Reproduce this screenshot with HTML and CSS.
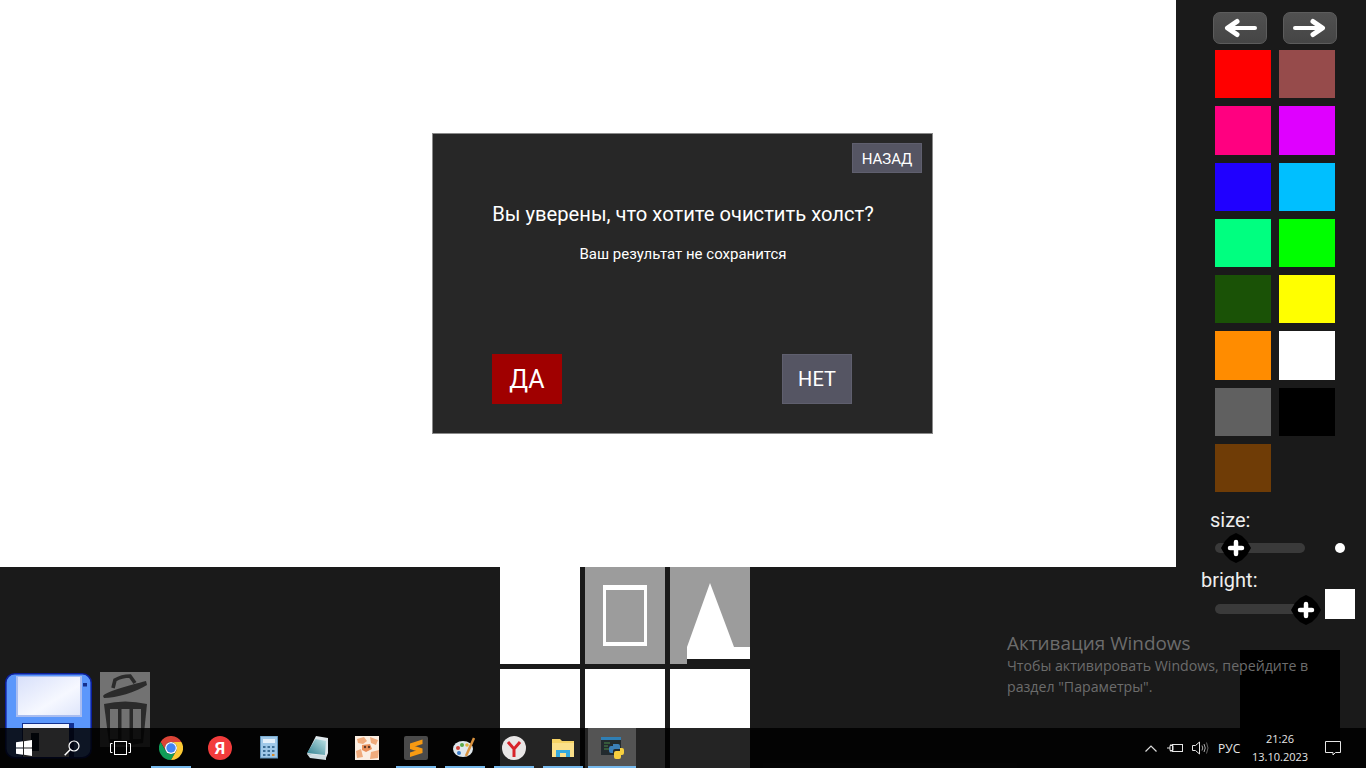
FILE: index.html
```html
<!DOCTYPE html>
<html lang="ru">
<head>
<meta charset="utf-8">
<title>Холст</title>
<link rel="stylesheet" href="styles.css">
</head>
<body>
<div class="app">
  <div class="workspace">
    <main class="canvas"></main>
    <section class="tray-area">
      <div class="tools">
        <svg class="save" viewBox="0 0 87 86" aria-label="Сохранить">
          <defs>
            <linearGradient id="lbl" x1="0" y1="0" x2="1" y2="1"><stop offset="0" stop-color="#d8e0fa"/><stop offset=".6" stop-color="#f6f8ff"/><stop offset="1" stop-color="#dfe6fb"/></linearGradient>
          </defs>
          <rect x=".8" y=".8" width="85.4" height="84" rx="9" fill="#5b97fb" stroke="#0b1f9c" stroke-width="1.6"/>
          <rect x="11" y="3" width="66" height="41" fill="#a9bdf0"/>
          <rect x="13" y="4" width="62" height="38" fill="url(#lbl)"/>
          <rect x="78" y="10" width="4" height="3.5" fill="#14318f"/>
          <rect x="17" y="50" width="52" height="34" fill="#12308f"/>
          <rect x="18" y="51" width="46" height="33" fill="#f3f5fc"/>
          <rect x="26" y="60" width="8" height="18" fill="#14233f"/>
        </svg>
        <svg class="trash" viewBox="0 0 50 75" aria-label="Очистить">
          <rect width="50" height="75" fill="#727272"/>
          <path d="M3 24 C5 20 30 13 46 9 L47 13 C36 20 16 26 4 26Z" fill="#2b2b2b"/>
          <path d="M13 16 L15 8 C20 5 26 4 30 4 L35 11" fill="none" stroke="#2b2b2b" stroke-width="3.6"/>
          <path d="M4 32 Q25 27 47 32 L43 71 Q25 75 9 71Z" fill="#2b2b2b"/>
          <rect x="10" y="37" width="8" height="30" fill="#727272"/>
          <rect x="21.500" y="37" width="8" height="31" fill="#727272"/>
          <rect x="33" y="37" width="8" height="30" fill="#727272"/>
        </svg>
      </div>
      <div class="tiles">
        <div class="tile"></div>
        <div class="tile tile-grey">
          <div class="tile-rect"></div>
        </div>
        <div class="tile tile-grey tile-shape">
          <svg class="shape" viewBox="0 0 80 97"><path d="M0 97V0H80V92H17V97Z" fill="#9c9c9c"/><path d="M40 16 L64 80 H80 V92 H17 V80Z" fill="#fff"/></svg>
        </div>
        <div class="tile"></div>
        <div class="tile"></div>
        <div class="tile"></div>
      </div>
    </section>
  </div>

  <aside class="panel">
    <div class="nav">
      <button class="nav-btn" aria-label="Назад"><svg viewBox="0 0 34 20"><path d="M14 3.500 L4.500 10 L14 16.500" fill="none" stroke="#fff" stroke-width="5" stroke-linecap="round" stroke-linejoin="round"/><path d="M7 10 H32" fill="none" stroke="#fff" stroke-width="4" stroke-linecap="round"/></svg></button>
      <button class="nav-btn" aria-label="Вперёд"><svg viewBox="0 0 34 20"><path d="M20 3.500 L29.500 10 L20 16.500" fill="none" stroke="#fff" stroke-width="5" stroke-linecap="round" stroke-linejoin="round"/><path d="M27 10 H2" fill="none" stroke="#fff" stroke-width="4" stroke-linecap="round"/></svg></button>
    </div>
    <div class="palette">
      <span class="swatch c-red"></span><span class="swatch c-brick"></span>
      <span class="swatch c-pink"></span><span class="swatch c-magenta"></span>
      <span class="swatch c-blue"></span><span class="swatch c-sky"></span>
      <span class="swatch c-mint"></span><span class="swatch c-lime"></span>
      <span class="swatch c-forest"></span><span class="swatch c-yellow"></span>
      <span class="swatch c-orange"></span><span class="swatch c-white"></span>
      <span class="swatch c-grey"></span><span class="swatch c-black"></span>
      <span class="swatch c-brown"></span>
    </div>
    <div class="control control-size">
      <div class="ctl-label label-size">size:</div>
      <div class="ctl-row">
        <div class="track">
          <svg class="knob knob-size" viewBox="0 0 30 30"><path d="M15 0 L21 3 L26 8 L30 15 L26 22 L21 27 L15 30 L9 27 L4 22 L0 15 L4 8 L9 3Z" fill="#000"/><path d="M15 9 V21 M9 15 H21" stroke="#fff" stroke-width="4.500" stroke-linecap="round"/></svg>
        </div>
        <span class="dot"></span>
      </div>
    </div>
    <div class="control control-bright">
      <div class="ctl-label label-bright">bright:</div>
      <div class="ctl-row">
        <div class="track">
          <svg class="knob knob-bright" viewBox="0 0 30 30"><path d="M15 0 L21 3 L26 8 L30 15 L26 22 L21 27 L15 30 L9 27 L4 22 L0 15 L4 8 L9 3Z" fill="#000"/><path d="M15 9 V21 M9 15 H21" stroke="#fff" stroke-width="4.500" stroke-linecap="round"/></svg>
        </div>
        <span class="bright-box"></span>
      </div>
    </div>
  </aside>

  <div class="black-box"></div>

  <div class="watermark">
    <div class="wm-title">Активация Windows</div>
    <div class="wm-text">Чтобы активировать Windows, перейдите в<br>раздел "Параметры".</div>
  </div>

  <div class="dialog">
    <div class="dialog-top"><button class="btn btn-back">НАЗАД</button></div>
    <h1 class="dialog-title">Вы уверены, что хотите очистить холст?</h1>
    <p class="dialog-sub">Ваш результат не сохранится</p>
    <div class="dialog-actions">
      <button class="btn btn-yes">ДА</button>
      <button class="btn btn-no">НЕТ</button>
    </div>
  </div>

  <footer class="taskbar">
    <div class="tb-sys">
      <div class="tb-slot">
        <svg class="ico16" viewBox="0 0 16 16"><path d="M0 2.300 L7 1.300 V7.500 H0Z M8 1.200 L16 0 V7.500 H8Z M0 8.500 H7 V14.700 L0 13.700Z M8 8.500 H16 V16 L8 14.800Z" fill="#fff"/></svg>
      </div>
      <div class="tb-slot">
        <svg class="ico16" viewBox="0 0 16 16"><circle cx="10" cy="6" r="5" fill="none" stroke="#fff" stroke-width="1.200"/><path d="M6.300 9.500 L.7 15.300" stroke="#fff" stroke-width="1.500"/></svg>
      </div>
      <div class="tb-slot">
        <svg class="ico-view" viewBox="0 0 21 14"><rect x="4.500" y=".5" width="12" height="13" fill="none" stroke="#fff"/><path d="M2.500 2.500 H.5 V11.500 H2.500 M18.500 2.500 H20.500 V11.500 H18.500" fill="none" stroke="#fff"/></svg>
      </div>
    </div>
    <div class="tb-apps">
      <div class="tb-app on">
        <svg class="ico24" viewBox="0 0 24 24"><path d="M22.400 6 A12 12 0 0 0 1.600 6 L6.800 15 A6 6 0 0 1 12 6Z" fill="#db4437"/><path d="M1.600 6 A12 12 0 0 0 12 24 L17.200 15 A6 6 0 0 1 6.800 15Z" fill="#0f9d58"/><path d="M22.400 6 H12 A6 6 0 0 1 17.200 15 L12 24 A12 12 0 0 0 22.400 6Z" fill="#fcc934"/><circle cx="12" cy="12" r="6" fill="#fff"/><circle cx="12" cy="12" r="4.700" fill="#4285f4"/></svg>
      </div>
      <div class="tb-app">
        <div class="ya">Я</div>
      </div>
      <div class="tb-app">
        <svg class="ico24" viewBox="0 0 24 24"><rect x="3.500" y="0" width="17" height="22" fill="#9fc8e8" stroke="#5f93bb"/><rect x="6" y="3" width="12" height="4" fill="#e4f0fa"/><path d="M6 10h2.500v2H6zM10.500 10H13v2h-2.500zM15 10h2.500v2H15zM6 14h2.500v2H6zM10.500 14H13v2h-2.500zM15 14h2.500v2H15zM6 18h2.500v2H6zM10.500 18H13v2h-2.500z" fill="#3e6f96"/><path d="M15 18h2.500v2H15z" fill="#d98a2b"/></svg>
      </div>
      <div class="tb-app">
        <svg class="ico24" viewBox="0 0 24 24"><defs><linearGradient id="note" x1="0" y1="1" x2="1" y2="0"><stop offset="0" stop-color="#2f7f8f"/><stop offset="1" stop-color="#bfe3e6"/></linearGradient></defs><path d="M10 0 L22 2 L22 17 L20 22 L1 18Z" fill="#dfe8ec"/><path d="M9.500 3 L20 5 L19 19 L1 17Z" fill="url(#note)"/><path d="M1 18 L20 20 L20 24 L4 22Z" fill="#cfdde2"/></svg>
      </div>
      <div class="tb-app">
        <svg class="ico24" viewBox="0 0 24 24"><rect width="24" height="24" fill="#fbeee2"/><path d="M2 3 L9 1 L12 5 L8 8 L3 7Z M15 1 L23 4 L21 9 L16 7Z M1 15 L6 13 L8 21 L2 22Z M16 16 L24 14 L23 22 L15 23Z" fill="#f0ab7c"/><path d="M7 9 L15 8 L17 13 L11 16 L7 14Z" fill="#e98f5a"/><circle cx="10" cy="11" r="1.200" fill="#5c3a28"/><circle cx="14" cy="11" r="1.200" fill="#5c3a28"/></svg>
      </div>
      <div class="tb-app">
        <svg class="ico24" viewBox="0 0 24 24"><rect width="24" height="24" rx="2" fill="#4a4a4a"/><path d="M18.500 3.500 V8 L6 12 V7.500Z M6 8.500 L18.500 12.500 V17 L6 13Z M18.500 12.500 V17 L6 21 V16.500Z" fill="#f79a12"/></svg>
      </div>
      <div class="tb-app">
        <svg class="ico24" viewBox="0 0 24 24"><ellipse cx="10" cy="13" rx="10" ry="8" fill="#dfe7ec"/><circle cx="5" cy="12" r="2" fill="#d2453c"/><circle cx="9" cy="9" r="2" fill="#57a848"/><circle cx="14" cy="9" r="1.800" fill="#e2b13c"/><circle cx="6" cy="17" r="2" fill="#3a7bc8"/><path d="M21 2 L13 20" stroke="#d9923e" stroke-width="2.500"/></svg>
      </div>
      <div class="tb-app">
        <svg class="ico24" viewBox="0 0 24 24"><circle cx="12" cy="12" r="12" fill="#e9e6e6"/><path d="M6 6 L12 13 L18 6 M12 13 V21" fill="none" stroke="#d8232a" stroke-width="3"/></svg>
      </div>
      <div class="tb-app">
        <svg class="ico24" viewBox="0 0 24 24"><path d="M1 3 H9 L11 5 H23 V21 H1Z" fill="#f6d365"/><path d="M1 7 H23 V21 H1Z" fill="#fbe08a"/><path d="M5 21 V14 H19 V21 H15 V17 H9 V21Z" fill="#35a9df"/></svg>
      </div>
      <div class="tb-app on active">
        <svg class="ico24" viewBox="0 0 24 24"><rect x="1" y="1" width="20" height="18" fill="#222a2e"/><rect x="1" y="1" width="20" height="3" fill="#2f7fb5"/><path d="M4 7h6M4 10h4M4 13h5" stroke="#4a8a4a"/><path d="M13 8 h5 a2 2 0 0 1 2 2 v3 h-5 a2 2 0 0 0 -2 2 v2 h-2 a2 2 0 0 1 -2 -2 v-3 a2 2 0 0 1 2 -2 h2Z" fill="#3b7fb8"/><path d="M20 12 h2 a2 2 0 0 1 2 2 v3 a2 2 0 0 1 -2 2 h-1 v2 a2 2 0 0 1 -2 2 h-3 a2 2 0 0 1 -2 -2 v-4 a2 2 0 0 1 2 -2 h4Z" fill="#f6cf3f"/></svg>
      </div>
    </div>
    <div class="tb-tray">
      <svg class="t-chev" viewBox="0 0 12 7"><path d="M.5 6.500 L6 1 L11.500 6.500" fill="none" stroke="#ddd" stroke-width="1.200"/></svg>
      <svg class="t-batt" viewBox="0 0 16 10"><rect x="5.500" y="1.500" width="10" height="7" fill="none" stroke="#e6e6e6"/><path d="M0 5 H3 M3 2.500 H6 V7.500 H3Z M4 1 V2.500 M4 7.500 V9" fill="none" stroke="#e6e6e6"/></svg>
      <svg class="t-vol" viewBox="0 0 17 14"><path d="M.5 4.500 H3.500 L7.500 1 V13 L3.500 9.500 H.5Z" fill="none" stroke="#e6e6e6"/><path d="M10 4.500 Q11.500 7 10 9.500 M12 3 Q14.500 7 12 11" fill="none" stroke="#aaa"/><path d="M14.500 1.500 Q17.500 7 14.500 12.500" fill="none" stroke="#666"/></svg>
      <span class="t-lang">РУС</span>
      <div class="t-clock"><span>21:26</span><span>13.10.2023</span></div>
      <svg class="t-note" viewBox="0 0 16 15"><path d="M.5 .5 H15.500 V11.500 H10.500 L8 14 V11.500 H.5Z" fill="none" stroke="#e6e6e6"/></svg>
    </div>
  </footer>
</div>
</body>
</html>
```
FILE: styles.css
```css
* { box-sizing: border-box; }
html, body { margin: 0; padding: 0; height: 100%; }
body { font-family: Roboto, "Noto Sans", sans-serif; background: #1a1a1a; overflow: hidden; }

.app { position: relative; width: 1366px; height: 768px; display: flex; overflow: hidden; background: #1a1a1a; }

.workspace { width: 1176px; display: flex; flex-direction: column; }
.canvas { height: 567px; background: #fff; flex: none; }
.tray-area { flex: 1; display: grid; grid-template-columns: 500px 250px; background: #1a1a1a; min-height: 0; }

.tools { display: flex; align-items: flex-start; gap: 8px; padding: 105px 0 0 5px; }
.save { width: 87px; height: 86px; flex: none; margin-top: 1px; }
.trash { width: 50px; height: 75px; flex: none; }

.tiles { display: grid; grid-template-columns: repeat(3, 80px); grid-template-rows: 97px 100px; column-gap: 5px; row-gap: 5px; }
.tile { background: #fff; position: relative; }
.tile-grey { background: #9c9c9c; display: flex; justify-content: center; align-items: flex-start; padding-top: 18px; }
.tile-rect { width: 44px; height: 61px; border-style: solid; border-color: #fff; border-width: 5px 3.5px 4px; }
.tile-shape { background: transparent; padding: 0; }
.shape { display: block; width: 80px; height: 97px; }

.panel { width: 190px; background: #1a1a1a; padding: 12px 0 0; display: flex; flex-direction: column; }
.nav { display: flex; gap: 16px; padding-left: 37px; height: 32px; }
.nav-btn { width: 54px; height: 32px; padding: 0; border: 1px solid #5c5c5c; border-radius: 7px; background: linear-gradient(#505050, #454545); display: flex; align-items: center; justify-content: center; }
.nav-btn svg { width: 34px; height: 20px; display: block; }

.palette { margin: 6px 0 0 39px; display: grid; grid-template-columns: 56px 56px; grid-auto-rows: 48.26px; column-gap: 8px; row-gap: 8px; }
.swatch { display: block; }
.c-red { background: #ff0000; }
.c-brick { background: #964b4b; }
.c-pink { background: #ff0080; }
.c-magenta { background: #df00ff; }
.c-blue { background: #2000ff; }
.c-sky { background: #00bfff; }
.c-mint { background: #00ff80; }
.c-lime { background: #00ff00; }
.c-forest { background: #1a5206; }
.c-yellow { background: #ffff00; }
.c-orange { background: #ff8c00; }
.c-white { background: #fff; }
.c-grey { background: #606060; }
.c-black { background: #000; }
.c-brown { background: #6f3c06; }

.control { color: #eee; }
.ctl-label { font-size: 20px; line-height: 24px; }
.control-size { margin-top: 15.6px; }
.label-size { padding-left: 34px; }
.control-bright { margin-top: 6px; }
.label-bright { padding-left: 25px; }
.ctl-row { display: flex; align-items: flex-start; padding-left: 39px; height: 30px; }
.control-bright .ctl-row { margin-top: -3px; }
.track { width: 90px; height: 10px; border-radius: 5px; background: #3a3a3a; position: relative; flex: none; }
.control-size .track { margin-top: 11px; }
.control-bright .track { margin-top: 15px; }
.knob { position: absolute; width: 30px; height: 30px; }
.knob-size { left: 6px; top: -10px; }
.knob-bright { left: 76px; top: -9px; }
.dot { width: 10px; height: 10px; border-radius: 50%; background: #fff; margin: 11px 0 0 30px; }
.bright-box { width: 30px; height: 30px; background: #fff; margin-left: 20px; }

.black-box { position: absolute; left: 1240px; top: 650px; width: 100px; height: 118px; background: #000; }

.watermark { position: absolute; left: 1007px; top: 631px; font-family: "Open Sans", "Noto Sans", sans-serif; color: #6c6c6c; }
.wm-title { font-size: 18.9px; line-height: 25px; }
.wm-text { font-size: 14.16px; line-height: 21px; margin-top: -1px; white-space: nowrap; }

.dialog { position: absolute; left: 432px; top: 133px; width: 501px; height: 301px; background: #272727; border: 1px solid #8a8a8a; display: flex; flex-direction: column; color: #fff; padding: 9px 10px 0 59px; }
.dialog-top { display: flex; justify-content: flex-end; height: 30px; }
.btn { border: 1px solid #5f5f6e; background: #555563; color: #fff; font-family: Roboto, sans-serif; padding: 0; display: flex; align-items: center; justify-content: center; }
.btn-back { width: 70px; height: 30px; font-size: 15px; padding-top: 2px; }
.dialog-title { margin: 28px 0 0; font-size: 20.2px; font-weight: 400; line-height: 26px; width: 382px; text-align: center; white-space: nowrap; }
.dialog-sub { margin: 18px 0 0; font-size: 15px; line-height: 18px; width: 382px; text-align: center; }
.dialog-actions { display: flex; justify-content: space-between; width: 360px; margin-top: 91px; }
.btn-yes { width: 70px; height: 50px; background: #a00000; border-color: #a00000; font-size: 25px; }
.btn-no { width: 70px; height: 50px; font-size: 20px; }

.taskbar { position: absolute; left: 0; right: 0; bottom: 0; height: 40px; background: rgba(0, 0, 0, .86); display: flex; align-items: stretch; }
.tb-sys { display: flex; width: 147px; flex: none; }
.tb-slot { width: 48px; display: flex; align-items: center; justify-content: center; }
.ico16 { width: 16px; height: 16px; display: block; }
.ico-view { width: 21px; height: 14px; display: block; }
.ico24 { width: 24px; height: 24px; display: block; }
.tb-apps { display: flex; gap: 1px; flex: none; }
.tb-app { width: 48px; display: flex; align-items: center; justify-content: center; position: relative; }
.tb-app:nth-child(n+6)::after, .tb-app.on::after { content: ""; position: absolute; left: 4px; right: 4px; bottom: 0; height: 2px; background: #76b9ed; }
.tb-app.active { background: rgba(255, 255, 255, .22); }
.tb-app.active::after { left: 0; right: 0; }
.ya { width: 24px; height: 24px; border-radius: 50%; background: #f23c3c; color: #fff; font-size: 17px; font-weight: 700; line-height: 24px; text-align: center; }

.tb-tray { margin-left: auto; display: flex; align-items: center; color: #e6e6e6; font-family: "Open Sans", "Noto Sans", sans-serif; font-size: 12px; }
.t-chev { width: 12px; height: 7px; margin-right: 10px; }
.t-batt { width: 16px; height: 10px; margin-right: 9px; }
.t-vol { width: 17px; height: 14px; margin-right: 9px; }
.t-lang { width: 23px; margin-right: 4px; white-space: nowrap; }
.t-clock { width: 70px; display: flex; flex-direction: column; align-items: center; line-height: 18px; font-size: 11px; }
.t-note { width: 16px; height: 15px; margin: 0 25px 0 10px; }
```
